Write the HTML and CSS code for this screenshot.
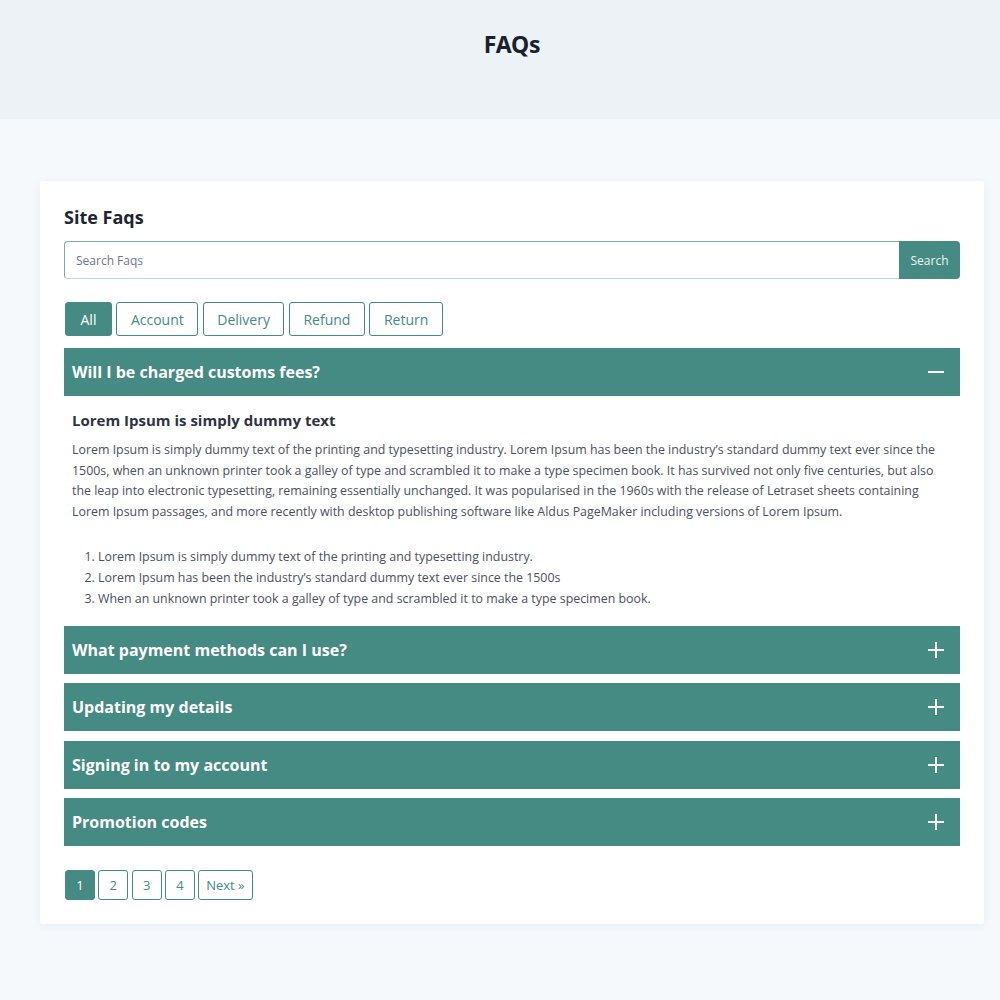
FILE: index.html
```html
<!DOCTYPE html>
<html lang="en">
<head>
<meta charset="utf-8">
<title>FAQs</title>
<link rel="stylesheet" href="styles.css">
</head>
<body>
<header class="hero">
  <h1 class="hero-title">FAQs</h1>
</header>
<main class="page">
  <section class="card">
    <h2 class="card-title">Site Faqs</h2>
    <form class="search">
      <input class="search-input" type="text" placeholder="Search Faqs">
      <button class="search-btn" type="button">Search</button>
    </form>
    <div class="tabs">
      <button class="tab active" type="button">All</button>
      <button class="tab" type="button">Account</button>
      <button class="tab" type="button">Delivery</button>
      <button class="tab" type="button">Refund</button>
      <button class="tab" type="button">Return</button>
    </div>
    <div class="accordion">
      <div class="item open">
        <div class="item-head">
          <span class="item-q">Will I be charged customs fees?</span>
          <svg class="item-icon" viewBox="0 0 18 18" width="18" height="18"><path d="M1 9h16" stroke="#fff" stroke-width="2"/></svg>
        </div>
        <div class="item-body">
          <h3 class="body-title">Lorem Ipsum is simply dummy text</h3>
          <p class="body-text">Lorem Ipsum is simply dummy text of the printing and typesetting industry. Lorem Ipsum has been the industry’s standard dummy text ever since the 1500s, when an unknown printer took a galley of type and scrambled it to make a type specimen book. It has survived not only five centuries, but also the leap into electronic typesetting, remaining essentially unchanged. It was popularised in the 1960s with the release of Letraset sheets containing Lorem Ipsum passages, and more recently with desktop publishing software like Aldus PageMaker including versions of Lorem Ipsum.</p>
          <ol class="body-list">
            <li>Lorem Ipsum is simply dummy text of the printing and typesetting industry.</li>
            <li>Lorem Ipsum has been the industry’s standard dummy text ever since the 1500s</li>
            <li>When an unknown printer took a galley of type and scrambled it to make a type specimen book.</li>
          </ol>
        </div>
      </div>
      <div class="item">
        <div class="item-head">
          <span class="item-q">What payment methods can I use?</span>
          <svg class="item-icon" viewBox="0 0 18 18" width="18" height="18"><path d="M1 9h16M9 1v16" stroke="#fff" stroke-width="2"/></svg>
        </div>
      </div>
      <div class="item">
        <div class="item-head">
          <span class="item-q">Updating my details</span>
          <svg class="item-icon" viewBox="0 0 18 18" width="18" height="18"><path d="M1 9h16M9 1v16" stroke="#fff" stroke-width="2"/></svg>
        </div>
      </div>
      <div class="item">
        <div class="item-head">
          <span class="item-q">Signing in to my account</span>
          <svg class="item-icon" viewBox="0 0 18 18" width="18" height="18"><path d="M1 9h16M9 1v16" stroke="#fff" stroke-width="2"/></svg>
        </div>
      </div>
      <div class="item">
        <div class="item-head">
          <span class="item-q">Promotion codes</span>
          <svg class="item-icon" viewBox="0 0 18 18" width="18" height="18"><path d="M1 9h16M9 1v16" stroke="#fff" stroke-width="2"/></svg>
        </div>
      </div>
    </div>
    <nav class="pager">
      <a class="page-link active">1</a>
      <a class="page-link">2</a>
      <a class="page-link">3</a>
      <a class="page-link">4</a>
      <a class="page-link next">Next »</a>
    </nav>
  </section>
</main>
</body>
</html>
```
FILE: styles.css
```css
* { box-sizing: border-box; }
body {
  margin: 0;
  background: #f5f9fc;
  font-family: "Open Sans", "Noto Sans", sans-serif;
  color: #3d4451;
}
.hero {
  background: #edf2f7;
  height: 119px;
  padding: 29px 0 0 24px;
}
.hero-title {
  margin: 0;
  text-align: center;
  font-family: "Noto Sans", sans-serif;
  font-size: 23px;
  font-weight: 700;
  color: #1a202c;
  line-height: 30px;
  letter-spacing: -0.2px;
}
.page {
  padding: 62px 16px 60px 40px;
}
.card {
  background: #fff;
  box-shadow: 0 2px 10px rgba(30, 50, 80, 0.06);
  border-radius: 3px;
  padding: 24px 24px 24px 24px;
}
.card-title {
  margin: 0 0 12px;
  font-size: 18px;
  font-weight: 700;
  color: #1e2530;
  line-height: 24px;
}
.search {
  display: flex;
  height: 38px;
  margin: 0 0 23px;
}
.search-input {
  flex: 1;
  border: 1px solid #7aaba6;
  border-bottom-color: #c3dbd8;
  border-right: none;
  border-radius: 4px 0 0 4px;
  padding: 0 11px;
  font-family: inherit;
  font-size: 12px;
  color: #3d4451;
}
.search-input::placeholder { color: #6b7590; }
.search-btn {
  width: 61px;
  border: none;
  background: #458a83;
  color: #eef5f4;
  font-family: inherit;
  font-size: 12px;
  border-radius: 0 4px 4px 0;
}
.tabs {
  display: flex;
  gap: 4.5px;
  margin-bottom: 12px;
  padding-left: 1px;
}
.tab {
  height: 34px;
  padding: 0 13.5px;
  border: 1px solid #458a83;
  border-radius: 3px;
  background: #fff;
  color: #458a83;
  font-family: inherit;
  font-size: 14px;
}
.tab.active {
  background: #458a83;
  color: #fff;
  padding: 0 14.5px;
}
.accordion {
  display: flex;
  flex-direction: column;
  gap: 9.3px;
}
.item-head {
  height: 48px;
  background: #458a83;
  display: flex;
  align-items: center;
  justify-content: space-between;
  padding: 0 15px 0 8px;
}
.item-q {
  color: #fff;
  font-size: 16px;
  font-weight: 700;
}
.item-icon { display: block; }
.item-body {
  padding: 14px 8px 8px;
}
.body-title {
  margin: 0 0 10px;
  font-size: 15px;
  font-weight: 700;
  color: #2d3340;
  line-height: 20px;
}
.body-text {
  margin: 0 0 23px;
  font-size: 12.4px;
  line-height: 20.7px;
  color: #4a5060;
}
.body-list {
  margin: 0;
  padding-left: 26px;
  font-size: 12.4px;
  line-height: 21px;
  color: #4a5060;
}
.pager {
  display: flex;
  gap: 3.3px;
  margin-top: 24px;
  padding-left: 1px;
}
.page-link {
  height: 30px;
  min-width: 30px;
  padding: 0 7px;
  display: flex;
  align-items: center;
  justify-content: center;
  border: 1px solid #458a83;
  border-radius: 3px;
  color: #458a83;
  font-size: 13px;
}
.page-link.active {
  background: #458a83;
  color: #fff;
}
```
